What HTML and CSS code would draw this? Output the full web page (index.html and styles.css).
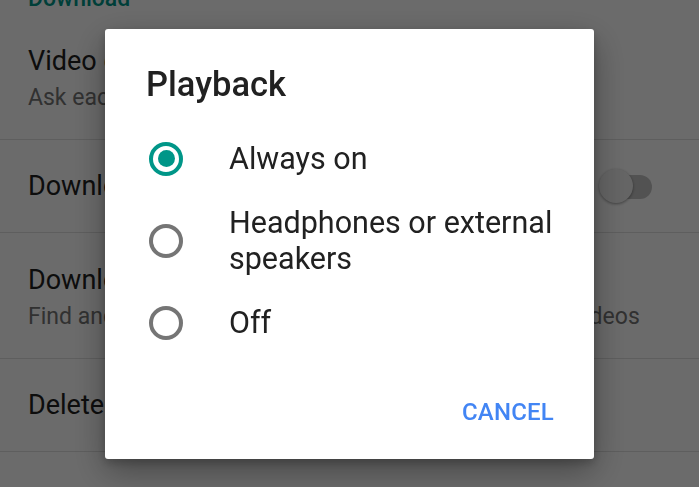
FILE: index.html
```html
<!DOCTYPE html>
<html lang="en">
<head>
    <meta charset="UTF-8">
    <meta name="viewport" content="width=device-width, initial-scale=1.0">
    <title>Settings - Playback</title>
    <link rel="stylesheet" href="styles.css">
</head>
<body>
    <div class="settings">
        <div class="section-title">Download</div>

        <div class="row two-line">
            <div class="primary">Video quality</div>
            <div class="secondary">Ask each time</div>
        </div>

        <div class="row one-line">
            <div class="primary">Download over Wi-Fi only</div>
            <div class="switch">
                <div class="switch-track"></div>
                <div class="switch-thumb"></div>
            </div>
        </div>

        <div class="row two-line">
            <div class="primary">Downloaded videos</div>
            <div class="secondary">Find and manage space used by all your downloaded videos</div>
        </div>

        <div class="row one-line">
            <div class="primary">Delete all downloads</div>
        </div>
    </div>

    <div class="scrim">
        <div class="dialog">
            <div class="dialog-title">Playback</div>

            <div class="options">
                <div class="option">
                    <span class="radio checked"></span>
                    <span class="option-label">Always on</span>
                </div>
                <div class="option">
                    <span class="radio"></span>
                    <span class="option-label">Headphones or external speakers</span>
                </div>
                <div class="option">
                    <span class="radio"></span>
                    <span class="option-label">Off</span>
                </div>
            </div>

            <div class="dialog-actions">
                <button class="text-button">Cancel</button>
            </div>
        </div>
    </div>
</body>
</html>
```

FILE: styles.css
```css
body {
    margin: 0;
    font-family: Roboto, "Liberation Sans", sans-serif;
    background-color: #fff;
    color: #212121;
    overflow: hidden;
}

/* Settings list behind the dialog */
.settings {
    width: 699px;
}

.section-title {
    margin: -13px 0 3px;
    padding: 0 28px;
    font-size: 23px;
    line-height: 24px;
    font-weight: 500;
    color: #009688;
}

.row {
    display: flex;
    box-sizing: border-box;
    padding: 0 47px 0 28px;
    border-bottom: 1px solid #e0e0e0;
    white-space: nowrap;
}

.two-line {
    height: 126px;
    padding-top: 4px;
    flex-direction: column;
    justify-content: center;
}

.one-line {
    height: 93px;
    align-items: center;
    justify-content: space-between;
}

.primary {
    font-size: 27px;
    line-height: 32px;
}

.secondary {
    font-size: 23px;
    line-height: 30px;
    margin-top: 6px;
    color: #757575;
}

.switch {
    position: relative;
    width: 53px;
    height: 35px;
}

.switch-track {
    position: absolute;
    left: 14px;
    right: 0;
    top: 6px;
    height: 24px;
    border-radius: 12px;
    background-color: #c4c4c4;
}

.switch-thumb {
    position: absolute;
    left: 0;
    top: 0;
    width: 34px;
    height: 34px;
    border-radius: 50%;
    background-color: #f1f1f1;
    box-shadow: 0 1px 3px rgba(0, 0, 0, 0.4);
}

/* Dialog */
.scrim {
    position: fixed;
    inset: 0;
    display: flex;
    align-items: center;
    justify-content: center;
    background-color: rgba(0, 0, 0, 0.58);
}

.dialog {
    width: 489px;
    box-sizing: border-box;
    padding: 35px 40px 29px 41px;
    background-color: #fff;
    border-radius: 3px;
    box-shadow: 0 12px 34px rgba(0, 0, 0, 0.35), 0 4px 10px rgba(0, 0, 0, 0.2);
}

.dialog-title {
    font-size: 34.5px;
    line-height: 40px;
    font-weight: 500;
    color: #212121;
    margin-bottom: 14px;
}

.option {
    display: flex;
    align-items: center;
    gap: 46px;
    min-height: 82px;
}

.radio {
    flex: none;
    display: flex;
    align-items: center;
    justify-content: center;
    box-sizing: border-box;
    width: 34px;
    height: 34px;
    margin-left: 3px;
    border: 4px solid #757575;
    border-radius: 50%;
}

.radio.checked {
    border-color: #009688;
}

.radio.checked::after {
    content: "";
    width: 17px;
    height: 17px;
    border-radius: 50%;
    background-color: #009688;
}

.option-label {
    font-size: 30.5px;
    line-height: 36px;
    color: #212121;
}

.dialog-actions {
    display: flex;
    justify-content: flex-end;
    margin-top: 30px;
}

.text-button {
    padding: 0;
    border: none;
    background: none;
    font-family: inherit;
    font-size: 24px;
    line-height: 36px;
    font-weight: 500;
    letter-spacing: 0.2px;
    text-transform: uppercase;
    color: #4285f4;
    cursor: pointer;
}
```
